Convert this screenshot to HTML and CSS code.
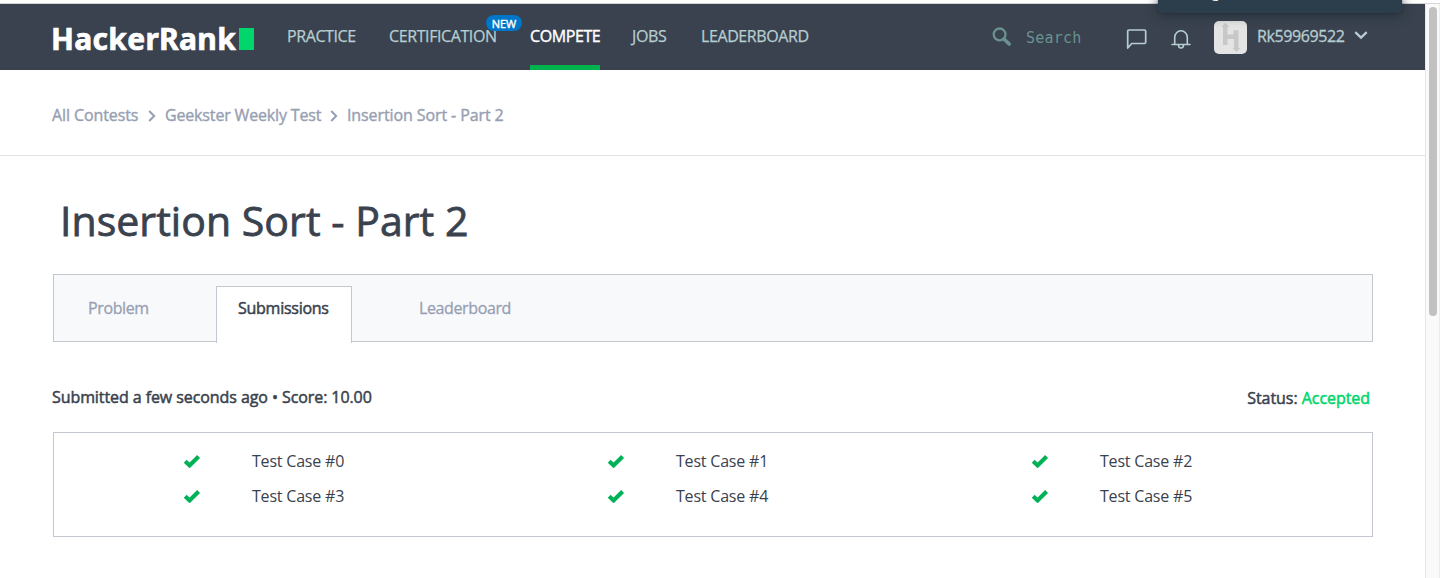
FILE: index.html
```html
<!DOCTYPE html>
<html lang="en">
<head>
<meta charset="utf-8">
<title>Insertion Sort - Part 2 | HackerRank</title>
<link rel="stylesheet" href="styles.css">
</head>
<body>
<div class="window-edge"></div>
<div class="viewport">
  <div class="page">
    <header class="navbar">
      <a class="logo" aria-label="HackerRank"><span class="logo-text">HackerRank</span><span class="logo-block"></span></a>
      <nav class="nav">
        <a class="nav-item practice">PRACTICE</a>
        <a class="nav-item certification">CERTIFICATION<span class="new-badge">NEW</span></a>
        <a class="nav-item compete active">COMPETE</a>
        <a class="nav-item jobs">JOBS</a>
        <a class="nav-item">LEADERBOARD</a>
      </nav>
      <div class="search">
        <svg width="20" height="20" viewBox="0 0 20 20" fill="none" stroke="#6b9190"><circle cx="7.6" cy="7.4" r="5.9" stroke-width="2.3"/><path d="M12 12l5.2 5" stroke-width="3.6" stroke-linecap="round"/></svg>
        <span>Search</span>
      </div>
      <svg class="chat" width="22" height="22" viewBox="0 0 22 22" fill="none" stroke="#b7cdd1" stroke-width="1.7" stroke-linejoin="round"><path d="M1.700 20V3.200Q1.700 2 2.900 2h15.500q1.300 0 1.300 1.300v10.900q0 1.300-1.300 1.300H5.700Z"/></svg>
      <svg class="bell" width="22" height="22" viewBox="0 0 22 22" fill="none" stroke="#b7cdd1" stroke-width="1.600" stroke-linecap="round"><path d="M2 16.500h18M4.700 16V9.500a6.300 6.800 0 0 1 12.600 0V16M8.500 17c0 4 5 4 5 0"/></svg>
      <div class="user">
        <svg width="33" height="33" viewBox="0 0 33 33"><rect width="33" height="33" rx="5" fill="#e4e4e4"/><path d="M11.300 1.800l4 4.200h-1.800v7.500h6V9.300h5V27h2l-4 4-4-4h1.500v-9h-6.500v6H9V6H7.300z" fill="#c8c8c8"/></svg>
        <span class="username">Rk59969522</span>
        <svg class="caret" width="14" height="9" viewBox="0 0 14 9" fill="none" stroke="#b7cdd1" stroke-width="2.300"><path d="M1.300 1.200L7 6.700l5.700-5.500"/></svg>
      </div>
    </header>
    <div class="breadcrumb">
      <a class="crumb-a">All Contests</a>
      <svg width="8" height="12" viewBox="0 0 8 12"><path d="M1.200 1l5 5-5 5"/></svg>
      <a class="crumb-b">Geekster Weekly Test</a>
      <svg width="8" height="12" viewBox="0 0 8 12"><path d="M1.200 1l5 5-5 5"/></svg>
      <a class="crumb-c">Insertion Sort - Part 2</a>
    </div>
    <main class="content">
      <h1>Insertion Sort - Part 2</h1>
      <div class="tabs">
        <a class="tab problem">Problem</a>
        <a class="tab selected">Submissions</a>
        <a class="tab board">Leaderboard</a>
      </div>
      <div class="summary">
        <span class="submitted">Submitted a few seconds ago • Score: 10.00</span>
        <span class="status">Status: <b>Accepted</b></span>
      </div>
      <div class="cases">
        <div class="case"><svg viewBox="0 0 18 14"><path d="M2.200 7.200l4.400 4.200 9-8.900"/></svg>Test Case #0</div>
        <div class="case"><svg viewBox="0 0 18 14"><path d="M2.200 7.200l4.400 4.200 9-8.900"/></svg>Test Case #1</div>
        <div class="case"><svg viewBox="0 0 18 14"><path d="M2.200 7.200l4.400 4.200 9-8.900"/></svg>Test Case #2</div>
        <div class="case"><svg viewBox="0 0 18 14"><path d="M2.200 7.200l4.400 4.200 9-8.900"/></svg>Test Case #3</div>
        <div class="case"><svg viewBox="0 0 18 14"><path d="M2.200 7.200l4.400 4.200 9-8.900"/></svg>Test Case #4</div>
        <div class="case"><svg viewBox="0 0 18 14"><path d="M2.200 7.200l4.400 4.200 9-8.900"/></svg>Test Case #5</div>
      </div>
    </main>
  </div>
  <div class="scrollbar"><div class="thumb"></div></div>
</div>
<div class="popup"><span class="popup-text">g</span></div>
</body>
</html>
```
FILE: styles.css
```css
* { box-sizing: border-box; }
body {
  margin: 0;
  height: 578px;
  overflow: hidden;
  position: relative;
  background: #fff;
  color: #39424e;
  font: 16px/22px "Open Sans", sans-serif;
}
svg { display: block; flex: none; }
.window-edge { height: 4px; background: #fdfdfd; border-bottom: 1px solid #d5d6da; }
.viewport { display: flex; height: 574px; }
.page { width: 1425px; }
.scrollbar { width: 15px; background: #fafafa; border-left: 1px solid #e6e6e6; border-right: 1px solid #ececec; padding: 3px 0 0 3px; }
.thumb { width: 8px; height: 309px; border-radius: 4px; background: #c1c1c1; }

.navbar { height: 66px; display: flex; align-items: flex-start; padding-left: 52px; background: #39424e; color: #b7cdd1; white-space: nowrap; }
.logo { display: flex; width: 235px; padding-top: 24px; }
.logo-text { width: 187px; margin-left: -1px; margin-right: 1px; font: 700 30px/22px "Noto Sans", sans-serif; letter-spacing: 0.3px; -webkit-text-stroke: 0.7px; color: #fff; }
.logo-block { width: 15px; height: 22px; background: #00d66b; }
.nav { display: flex; height: 66px; }
.nav-item { position: relative; padding-top: 21px; height: 66px; -webkit-text-stroke: 0.25px; letter-spacing: -0.4px; }
.practice { width: 70px; margin-right: 32px; }
.certification { width: 108px; margin-right: 33px; }
.compete { width: 70px; margin-right: 32px; }
.jobs { width: 36px; margin-right: 33px; }
.active { color: #fff; border-bottom: 5px solid #00b24e; -webkit-text-stroke: 0.4px; }
.new-badge { position: absolute; left: 97px; top: 11px; width: 36px; height: 16px; border-radius: 8px; background: #0076c8; color: #fff; font-size: 11px; line-height: 17px; text-align: center; letter-spacing: 0; -webkit-text-stroke: 0.4px; }
.search { display: flex; margin: 23px 0 0 auto; width: 134px; gap: 14px; color: #6b9190; font: 15px/22px "DejaVu Sans Mono", monospace; letter-spacing: 0.2px; }
.chat { margin: 24px 22px 0 0; }
.bell { margin: 24px 22px 0 0; }
.user { display: flex; width: 211px; padding-top: 17px; }
.username { width: 97px; margin-left: 10px; padding-top: 4px; -webkit-text-stroke: 0.3px; letter-spacing: -0.4px; }
.caret { margin-top: 10px; }

.breadcrumb { height: 86px; display: flex; padding: 34px 0 0 52px; border-bottom: 1px solid #e1e2e6; color: #979fb3; white-space: nowrap; -webkit-text-stroke: 0.4px; letter-spacing: -0.1px; }
.breadcrumb svg { margin: 6px 9px 0; fill: none; stroke: #979fb3; stroke-width: 2; }
.crumb-a { width: 87px; }
.crumb-b { width: 156px; letter-spacing: -0.16px; }

.content { margin-left: 53px; width: 1320px; }
h1 { margin: 0; padding: 34px 0 0 7px; height: 118px; font-size: 41px; line-height: 60px; font-weight: 400; letter-spacing: 0.05px; -webkit-text-stroke: 0.8px; white-space: nowrap; }
.tabs { height: 68px; display: flex; border: 1px solid #c2c7d0; background: #f8f9fb; color: #979fb3; }
.tab { padding-top: 22px; -webkit-text-stroke: 0.3px; letter-spacing: -0.38px; }
.problem { width: 162px; padding-left: 34px; }
.selected { width: 136px; height: 57px; margin-top: 11px; padding: 10px 0 0 21px; border: 1px solid #c2c7d0; border-bottom: 0; background: #fff; color: #39424e; -webkit-text-stroke: 0.5px; letter-spacing: -0.26px; }
.board { padding-left: 67px; }
.summary { height: 90px; padding: 44px 3px 0 0; display: flex; justify-content: space-between; -webkit-text-stroke: 0.5px; }
.submitted { margin-left: -1px; letter-spacing: -0.08px; }
.status { padding-top: 1px; letter-spacing: -0.05px; }
.status b { font-weight: 400; color: #00d66b; }
.cases { height: 105px; border: 1px solid #c2c7d0; display: grid; grid-template-columns: repeat(3, 424px); grid-auto-rows: 35px; padding: 10px 0 0 129px; }
.case { display: flex; align-items: center; gap: 51px; height: 35px; letter-spacing: -0.2px; }
.case svg { width: 18px; height: 14px; fill: none; stroke: #00b257; stroke-width: 4.2; }

.popup { position: absolute; left: 1158px; top: 0; width: 244px; height: 13px; overflow: hidden; background: #2c3e4c; border-radius: 0 0 2px 2px; box-shadow: 0 1px 12px #202b36, 0 0 1px #111; }
.popup-text { position: absolute; left: 54px; top: -16px; color: #fff; font-size: 13px; line-height: 18px; }
```
